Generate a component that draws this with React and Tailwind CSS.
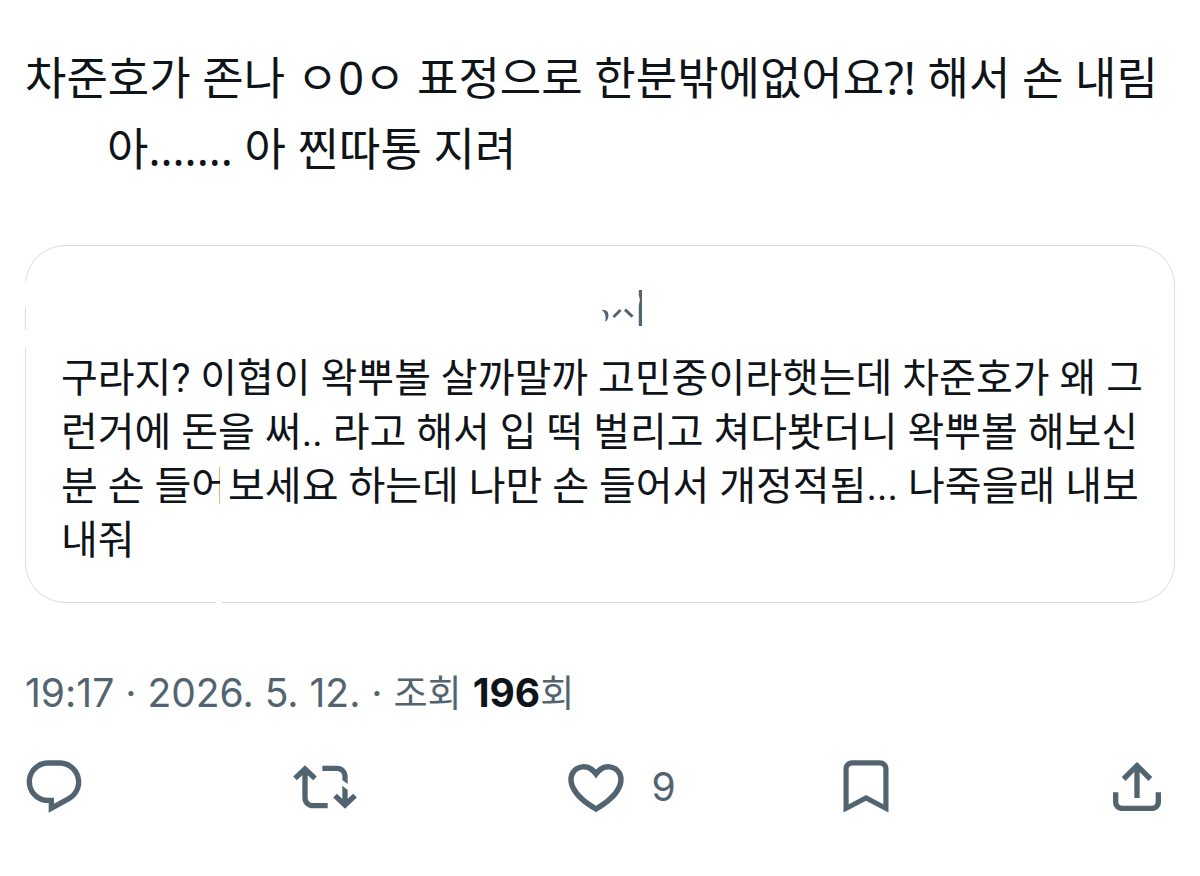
const QUOTE_LINES = [
  '구라지? 이협이 왁뿌볼 살까말까 고민중이라햇는데 차준호가 왜 그',
  '런거에 돈을 써.. 라고 해서 입 떡 벌리고 쳐다봣더니 왁뿌볼 해보신',
];

function Icon({ children }) {
  return (
    <svg viewBox="0 0 24 24" className="h-16 w-16 shrink-0" fill="currentColor" aria-hidden="true">
      {children}
    </svg>
  );
}

function Action({ label, count, children }) {
  return (
    <div className="flex flex-1 last:flex-none">
      <button type="button" aria-label={label} className="flex items-center gap-6 cursor-pointer">
        <Icon>{children}</Icon>
        {count && <span className="text-[39px] leading-[48px]">{count}</span>}
      </button>
    </div>
  );
}

function QuoteCard() {
  return (
    <article className="relative mt-[61px] rounded-[40px] border border-[#d3dfe2] px-[35px] pt-[35px] pb-[34px]">
      {/* breaks in the outline */}
      <span className="absolute -left-px top-[35px] h-[26px] w-px bg-white" />
      <span className="absolute -left-px top-[84px] h-[18px] w-px bg-white" />
      <span className="absolute -bottom-px left-[190px] h-px w-[6px] bg-white" />

      <header className="flex h-[54px] items-center justify-center pl-[44px] text-[#536471]">
        <svg viewBox="0 0 44 40" className="h-10 w-11" fill="currentColor" aria-hidden="true">
          <path d="M1.500 22c4.500-.5 7 1.500 7 5 0 2.700-1 5-2.500 6.500l-.8-.4c1-4 .3-8.500-3.700-11.100z" />
          <path d="M13.500 29l7-7M25 21.700l7.500 7" fill="none" stroke="currentColor" strokeWidth="3" />
          <path d="M38.800 2H42v36h-3.200V18c.2-3 1.400-5 .9-7.500-.3-1.500-.9-2-.9-3.500z" />
        </svg>
      </header>

      <p className="mt-[17px] whitespace-nowrap font-[Roboto,'Noto_Sans_CJK_KR',sans-serif] text-[40px] leading-[54px]">
        {QUOTE_LINES.map((line) => (
          <span key={line} className="block">{line}</span>
        ))}
        <span className="block">
          분 손 들
          <span className="relative">
            어
            <span className="absolute right-0 top-0 h-12 w-2 bg-white" />
          </span>
          보세요 하는데 나만 손 들어서 개정적됨... 나죽을래 내보
        </span>
        <span className="block">내줘</span>
      </p>
    </article>
  );
}

export default function App() {
  return (
    <main className="min-h-screen bg-white px-[25px] pt-[42px] font-[Inter,'Noto_Sans_CJK_KR',sans-serif] text-[#0f1419]">
      <div className="whitespace-nowrap font-['Noto_Sans','Noto_Sans_CJK_KR',sans-serif] text-[45px] leading-[71px]">
        <p>차준호가 존나 ㅇ0ㅇ 표정으로 한분밖에없어요?! 해서 손 내림</p>
        <p className="pl-[82px]">아....... 아 찐따통 지려</p>
      </div>

      <QuoteCard />

      <p className="mt-[66px] text-[39px] leading-[48px] text-[#536471]">
        <time dateTime="2026-05-12T19:17">19:17 · 2026. 5. 12.</time> · <span className="text-[37px]">조회</span>{' '}
        <strong className="font-bold text-[#0f1419]">196</strong><span className="text-[37px]">회</span>
      </p>

      <div className="mt-[37px] -ml-[3px] mr-[6px] flex items-center text-[#536471]">
        <Action label="답글">
          <path d="M1.751 10c0-4.420 3.584-8 8.005-8h4.366c4.490 0 8.129 3.640 8.129 8.130 0 2.960-1.607 5.680-4.196 7.110l-8.054 4.460v-3.690h-.067c-4.490.1-8.183-3.510-8.183-8.010zm8.005-6c-3.317 0-6.005 2.690-6.005 6 0 3.370 2.770 6.080 6.138 6.010l.351-.01h1.761v2.300l5.087-2.810c1.951-1.080 3.163-3.130 3.163-5.360 0-3.390-2.744-6.130-6.129-6.130H9.756z" />
        </Action>
        <Action label="재게시">
          <path d="M4.500 3.880l4.432 4.140-1.364 1.460L5.500 7.550V16c0 1.100.896 2 2 2H13v2H7.500c-2.209 0-4-1.790-4-4V7.550L1.432 9.480.068 8.020 4.500 3.880z" />
          <path d="M16.500 6H11V4h5.500c2.209 0 4 1.790 4 4v2.900l-2-1.500V8c0-1.100-.896-2-2-2zM18.500 11.500l2 1.600v3.350l2.068-1.930 1.364 1.460-4.432 4.140-4.432-4.140 1.364-1.460 2.068 1.930z" />
        </Action>
        <Action label="마음에 들어요" count="9">
          <path transform="matrix(1.04 0 0 1.02 -.48 -.15)" d="M16.697 5.500c-1.222-.06-2.679.51-3.890 2.160l-.805 1.090-.806-1.090C9.984 6.010 8.526 5.440 7.304 5.500c-1.243.07-2.349.78-2.910 1.910-.552 1.120-.633 2.780.479 4.820 1.074 1.970 3.257 4.270 7.129 6.610 3.870-2.340 6.052-4.640 7.126-6.610 1.111-2.040 1.030-3.700.477-4.820-.561-1.130-1.666-1.840-2.908-1.910zm4.187 7.690c-1.351 2.480-4.001 5.120-8.379 7.670l-.503.300-.504-.300c-4.379-2.550-7.029-5.190-8.382-7.670-1.360-2.500-1.410-4.860-.514-6.670.887-1.790 2.647-2.910 4.601-3.010 1.651-.09 3.368.56 4.798 2.010 1.429-1.450 3.146-2.100 4.796-2.010 1.954.1 3.714 1.220 4.601 3.010.896 1.810.846 4.170-.514 6.670z" />
        </Action>
        <Action label="북마크">
          <path d="M3.560 5.200C3.560 3.350 5 1.950 6.800 1.950h10.400c1.800 0 3.240 1.400 3.240 3.250v16.400L12 17.200l-8.440 4.400V5.200zM6.800 3.950c-.75 0-1.300.5-1.300 1.250v13.300L12 15l6.500 3.500V5.200c0-.75-.55-1.250-1.300-1.250H6.800z" />
        </Action>
        <Action label="공유">
          <path d="M12 2.590l5.700 5.700-1.410 1.420L13 6.410V16.100h-2V6.410l-3.300 3.300-1.410-1.420L12 2.590zM21 14v3.600c0 1.900-1.500 3.400-3.400 3.400H6.400C4.500 21 3 19.500 3 17.600V14h2v3.600c0 .8.600 1.400 1.400 1.400h11.200c.8 0 1.400-.6 1.400-1.400V14h2z" />
        </Action>
      </div>
    </main>
  );
}
